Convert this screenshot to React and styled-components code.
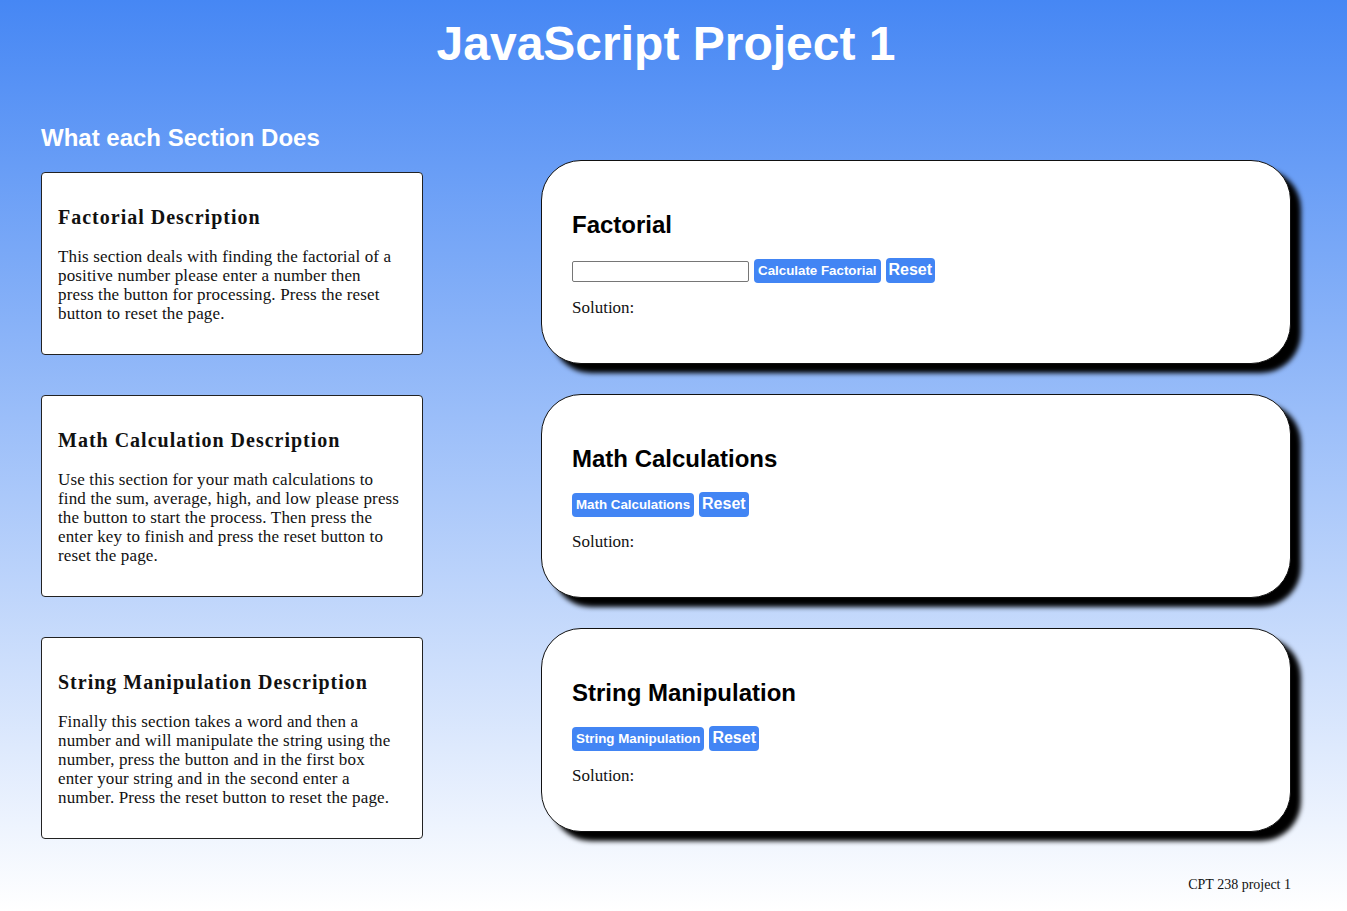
import styled, { createGlobalStyle } from "styled-components";

const GlobalStyle = createGlobalStyle`
  html, body {
    margin: 0;
    padding: 0;
  }
  body {
    min-height: 911px;
    background: linear-gradient(#4687f4, #ffffff) no-repeat;
    background-size: 100% 911px;
    font-family: Georgia, "Liberation Serif", serif;
  }
`;

const Page = styled.div`
  width: 1332px;
  padding: 15px 0 10px;
`;

const Title = styled.h1`
  margin: 0;
  text-align: center;
  color: #fff;
  font-family: "Liberation Sans", Arial, sans-serif;
  font-size: 48px;
  font-weight: bold;
  line-height: 58px;
`;

const Layout = styled.div`
  display: grid;
  grid-template-columns: 382px 750px;
  column-gap: 118px;
  padding: 0 41px;
  align-items: start;
`;

const Column = styled.div`
  display: flex;
  flex-direction: column;
  gap: ${(p) => p.$gap}px;
  padding-top: ${(p) => p.$top}px;
`;

const SideHeading = styled.h2`
  margin: 0 0 -20px;
  color: #fff;
  font-family: "Liberation Sans", Arial, sans-serif;
  font-size: 24px;
  font-weight: bold;
  line-height: 28px;
`;

const InfoBox = styled.div`
  background: #fff;
  border: 1px solid #222;
  border-radius: 4px;
  padding: 16px;
  color: #111;
`;

const InfoTitle = styled.h3`
  margin: 17px 0 19px;
  font-family: Georgia, "Liberation Serif", serif;
  font-size: 20px;
  font-weight: bold;
  line-height: 22px;
  letter-spacing: 1px;
`;

const InfoText = styled.p`
  margin: 0 0 15px;
  font-size: 17px;
  line-height: 19px;
  letter-spacing: 0.15px;
  white-space: nowrap;
`;

const Card = styled.section`
  background: #fff;
  border: 1px solid #111;
  border-radius: 40px;
  padding: 30px;
  box-shadow: 10px 9px 5px #000;
`;

const CardTitle = styled.h2`
  margin: 20px 0 20px;
  font-family: "Liberation Sans", Arial, sans-serif;
  font-size: 24px;
  font-weight: bold;
  line-height: 28px;
  color: #000;
`;

const Controls = styled.div`
  display: flex;
  align-items: center;
  gap: 5px;
  height: 24px;
`;

const TextInput = styled.input`
  box-sizing: border-box;
  width: 177px;
  height: 21px;
  border: 1px solid #767676;
  border-radius: 2px;
  margin: 0;
`;

const Button = styled.button`
  background: #4285f4;
  color: #fff;
  border: none;
  border-radius: 4px;
  font-family: "Liberation Sans", Arial, sans-serif;
  font-weight: bold;
  font-size: ${(p) => (p.$big ? "16px" : "13.33px")};
  padding: ${(p) => (p.$big ? "3px 3px 4px" : "4px 4px")};
  margin: ${(p) => (p.$big ? "-2px 0 0" : "0")};
  line-height: ${(p) => (p.$big ? 18 : 16)}px;
  cursor: pointer;
`;

const Solution = styled.p`
  margin: 16px 0 16px;
  font-size: 17px;
  line-height: 18px;
  color: #111;
`;

const Footer = styled.div`
  text-align: right;
  padding: 38px 41px 0 0;
  font-size: 14px;
  color: #111;
`;

const descriptions = [
  {
    title: "Factorial Description",
    lines: [
      "This section deals with finding the factorial of a",
      "positive number please enter a number then",
      "press the button for processing. Press the reset",
      "button to reset the page.",
    ],
  },
  {
    title: "Math Calculation Description",
    lines: [
      "Use this section for your math calculations to",
      "find the sum, average, high, and low please press",
      "the button to start the process. Then press the",
      "enter key to finish and press the reset button to",
      "reset the page.",
    ],
  },
  {
    title: "String Manipulation Description",
    lines: [
      "Finally this section takes a word and then a",
      "number and will manipulate the string using the",
      "number, press the button and in the first box",
      "enter your string and in the second enter a",
      "number. Press the reset button to reset the page.",
    ],
  },
];

const sections = [
  { title: "Factorial", button: "Calculate Factorial", input: true },
  { title: "Math Calculations", button: "Math Calculations" },
  { title: "String Manipulation", button: "String Manipulation" },
];

const App = () => {
  return (
    <Page>
      <GlobalStyle />
      <Title>JavaScript Project 1</Title>
      <Layout>
        <Column $gap={40} $top={51}>
          <SideHeading>What each Section Does</SideHeading>
          {descriptions.map((d) => (
            <InfoBox key={d.title}>
              <InfoTitle>{d.title}</InfoTitle>
              <InfoText>
                {d.lines.map((line, i) => (
                  <span key={i}>
                    {line}
                    {i < d.lines.length - 1 && <br />}
                  </span>
                ))}
              </InfoText>
            </InfoBox>
          ))}
        </Column>
        <Column $gap={30} $top={87}>
          {sections.map((s) => (
            <Card key={s.title}>
              <CardTitle>{s.title}</CardTitle>
              <Controls>
                {s.input && <TextInput type="text" />}
                <Button>{s.button}</Button>
                <Button $big>Reset</Button>
              </Controls>
              <Solution>Solution:</Solution>
            </Card>
          ))}
        </Column>
      </Layout>
      <Footer>CPT 238 project 1</Footer>
    </Page>
  );
};

export default App;
